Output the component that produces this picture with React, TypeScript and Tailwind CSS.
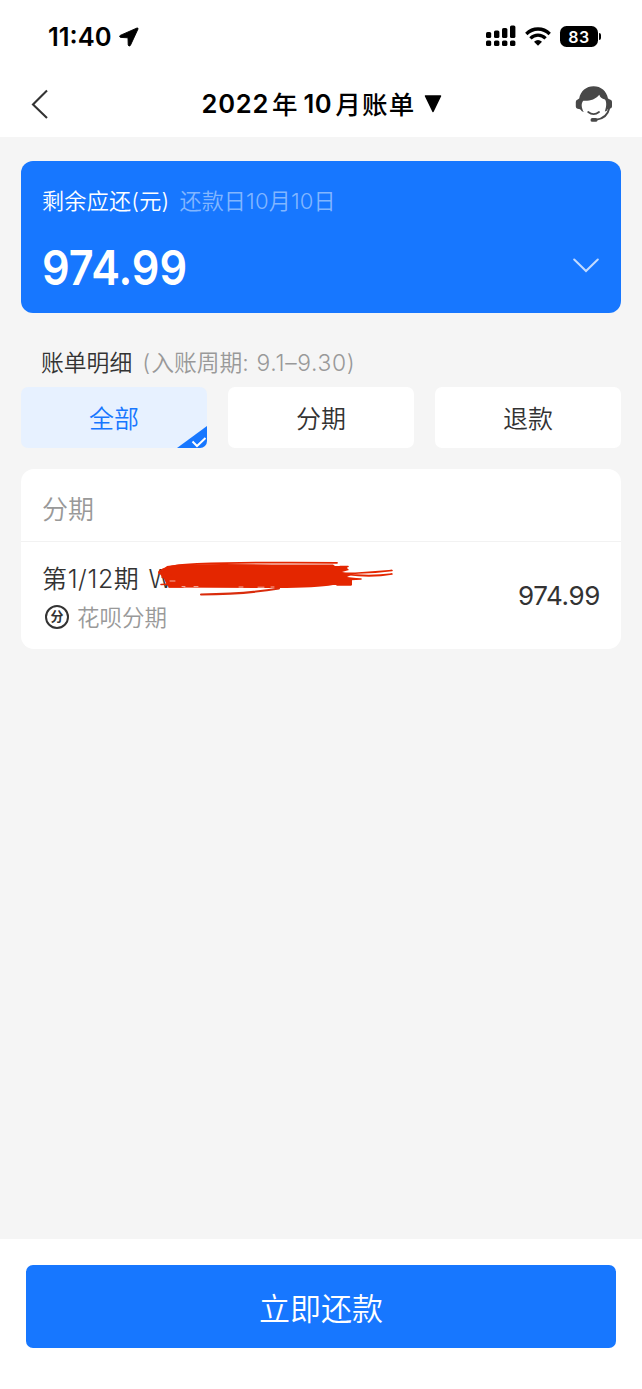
type Tab = {
  key: string;
  label: string;
};

const TABS: Tab[] = [
  { key: "all", label: "全部" },
  { key: "installment", label: "分期" },
  { key: "refund", label: "退款" },
];

const ACTIVE_TAB = "all";

function StatusBar() {
  return (
    <div className="flex h-[72px] items-center justify-between pr-[41px] pl-12">
      <div className="flex items-center gap-[7px] pt-[2px]">
        <span className="text-[25.5px] leading-8 font-semibold">11:40</span>
        <svg className="mt-[-1px] h-[20px] w-[20px]" viewBox="0 0 20 20">
          <path
            d="M18 1 L1.2 8.4 Q-.2 9.8 1.6 10.4 L9 10.8 L9.2 18 Q9.8 20 11.4 18.4 L19 2 Q19.2 .6 18 1 Z"
            fill="#000"
            stroke="#000"
            strokeWidth="0.9"
          />
        </svg>
      </div>
      <div className="flex items-center">
        <svg className="h-[22px] w-[30px]" viewBox="0 0 30 22" fill="#000">
          <rect x="0" y="7" width="5.2" height="6" rx="1.6" />
          <rect x="8" y="5.5" width="5.4" height="7.5" rx="1.6" />
          <rect x="16" y="3" width="5.4" height="10" rx="1.6" />
          <rect x="24" y="0.5" width="5.4" height="12.5" rx="1.6" />
          <rect x="0" y="15.5" width="5.2" height="5.5" rx="1.6" />
          <rect x="8" y="15.5" width="5.4" height="5.5" rx="1.6" />
          <rect x="16" y="15.5" width="5.4" height="5.5" rx="1.6" />
          <rect x="24" y="15.5" width="5.4" height="5.5" rx="1.6" />
        </svg>
        <svg className="ml-[9px] h-[19px] w-[26px]" viewBox="0 0 26 19" fill="none" stroke="#000" strokeWidth="3.3">
          <path d="M1.3 7 Q6.3 2 13 2 T24.7 7" />
          <path d="M5.4 11.4 Q8.8 8.1 13 8.1 T20.6 11.4" />
          <path d="M9 14.8 Q13 11.4 17 14.8 L13 18.8 Z" fill="#000" stroke="none" />
        </svg>
        <div className="ml-[9px] flex h-[21px] w-[38px] items-center justify-center rounded-[6.5px] bg-black pt-px text-[16px] font-semibold tracking-[0.03em] text-white">
          83
        </div>
        <div className="ml-px h-[7px] w-[2px] rounded-r-full bg-black" />
      </div>
    </div>
  );
}

function ServiceIcon() {
  return (
    <svg className="mt-[-2px] h-[38px] w-[38px]" viewBox="0 0 38 38" fill="none">
      <path
        d="M4.2 13.5 C5.5 6 11.3 1.2 18.6 1.2 C26 1.2 31.5 6 33 13.5 L36 15 Q37 15.5 37 17 V21.5 Q37 23.5 34.7 23.8 L32.8 24 Q31.8 26.5 29.8 26.5 C31.5 22 31.8 17 30 14.5 C26.8 14 25 12.2 24.3 9.8 C20.5 14.8 14.8 16 8.3 15.7 C6 18 6.3 22.8 8.8 27 Q6.8 26.7 5.1 24.3 L2.6 23.8 Q.8 23.3 .8 21.5 V17 Q.8 15.2 2.3 14.7 Z"
        fill="#484848"
      />
      <path d="M13.2 27 Q18.6 31.2 24 27" stroke="#484848" strokeWidth="1.8" strokeLinecap="round" />
      <path d="M34.3 23 C33 29.5 28.5 33.8 21 34.8" stroke="#484848" strokeWidth="1.9" />
      <rect x="15.5" y="33" width="7" height="3.8" rx="1.9" fill="#484848" />
    </svg>
  );
}

function NavBar() {
  return (
    <div className="flex h-[65px] items-center justify-between pr-[29px] pl-[31px]">
      <svg className="mt-[-2px] h-[30px] w-[37px]" viewBox="0 0 37 30" fill="none" stroke="#333" strokeWidth="2.1">
        <path d="M16 1.5 L2 15.5 L16 29" />
      </svg>
      <h1 className="mt-[-2px] flex items-center text-[25.5px] leading-8 font-semibold whitespace-nowrap">
        <span className="tracking-[0.03em]">2022</span>
        <span className="mt-[-2px] ml-[3px] font-['Noto_Sans_CJK_SC'] font-medium">年</span>
        <span className="ml-[6px] tracking-[0.02em]">10</span>
        <span className="mt-[-2px] ml-[3px] font-['Noto_Sans_CJK_SC'] font-medium tracking-[0.05em]">月账单</span>
        <svg className="ml-[8px] h-[18px] w-[18px]" viewBox="0 0 18 18">
          <path d="M1.5 1 H16.5 L9 16.5 Z" fill="#000" stroke="#000" strokeWidth="1.5" strokeLinejoin="round" />
        </svg>
      </h1>
      <ServiceIcon />
    </div>
  );
}

function BalanceCard() {
  return (
    <div className="h-[152px] rounded-[12px] bg-[#1777ff] pt-[24px] pr-[22px] pl-[21px] text-white">
      <div className="flex h-[34px] items-center text-[22.1px] whitespace-nowrap">
        <span className="tracking-[0.01em]">剩余应还(元)</span>
        <span className="ml-[10px] tracking-[0.006em] text-[#82b6ff]">还款日10月10日</span>
      </div>
      <div className="mt-[18px] flex h-[62px] items-center justify-between">
        <span className="origin-left scale-x-[0.9] text-[48px] font-semibold">974.99</span>
        <svg className="mt-[-5px] h-[15px] w-[26px]" viewBox="0 0 26 15" fill="none" stroke="#c3dbff" strokeWidth="2">
          <path d="M1.2 1.5 L13 13 L24.8 1.5" strokeLinecap="round" />
        </svg>
      </div>
    </div>
  );
}

function Tabs() {
  return (
    <div className="grid h-[61px] grid-cols-3 gap-[21px] text-[25px]">
      {TABS.map((t) =>
        t.key === ACTIVE_TAB ? (
          <div key={t.key} className="relative flex items-center justify-center overflow-hidden rounded-[7px] bg-[#e7f1ff] pt-[5px] text-[#1777ff]">
            {t.label}
            <svg className="absolute right-0 bottom-0 h-[22px] w-[30px]" viewBox="0 0 30 22">
              <path d="M0 22 L30 0 V22 Z" fill="#1777ff" />
              <path d="M15.5 15.5 L20 20 L28.5 12" fill="none" stroke="#fff" strokeWidth="2" />
            </svg>
          </div>
        ) : (
          <div key={t.key} className="flex items-center justify-center rounded-[7px] bg-white pt-[5px] text-[#333]">
            {t.label}
          </div>
        )
      )}
    </div>
  );
}

function Scribble() {
  return (
    <svg className="absolute top-0 left-[115px] h-[40px] w-[240px]" viewBox="0 0 240 40" fill="none" stroke="#e42600" strokeLinecap="round" strokeLinejoin="round">
      <path
        d="M2 12 L10 5 L22 3.6 Q60 2.5 115 3.5 L176 3.5 L178 5 L191 5 L190 7 L192 9 L185 11 L194 14 L190 16 L204 17.5 L195 19 L195 24 L176 24 Q160 26.8 120 27 L12 26.6 L10 24 L7 18 Z"
        fill="#e42600"
        stroke="none"
      />
      <path d="M2 11 Q8 4 40 2.8 Q100 1 180 1.8" strokeWidth="1.8" />
      <path d="M2 12 L12 10 M5 16 L14 14 M4 23.5 L14 23 M12 26 L26 26 M183 5.5 L191 5.5" strokeWidth="1.6" />
      <path d="M184 12 Q210 13 235 9.5 Q212 11 188 13 Q212 16 235 13 Q215 16.5 190 13.5 M184 19 L204 18 M180 24 L194 24" strokeWidth="1.6" />
      <path d="M44 33.5 Q90 33 122 27.5" strokeWidth="2" stroke="#d92c0c" />
      <path d="M13 20 H18 M25 25.6 H28 M37 25.6 H41 M82 26 H86 M101 26.2 H107 M114 26 H117" stroke="#f9d4cb" strokeWidth="0.8" />
    </svg>
  );
}

function BillItem() {
  return (
    <div className="flex h-[107px] items-center justify-between pr-[21px] pl-[21px]">
      <div className="pt-[5px]">
        <div className="relative flex h-[36px] items-center pt-[3px] text-[25px] whitespace-nowrap text-[#333]">
          <span className="tracking-[0.025em]">第1/12期</span>
          <span className="ml-[9px] font-light">W</span>
          <Scribble />
        </div>
        <div className="mt-[1px] flex h-[38px] items-center">
          <div className="ml-[3px] flex h-[24px] w-[24px] items-center justify-center rounded-full border-2 border-[#333] text-[13px] leading-none font-bold text-[#333]">
            分
          </div>
          <span className="ml-[8px] pt-[2px] text-[22.5px] text-[#999]">花呗分期</span>
        </div>
      </div>
      <span className="text-[26px] font-normal tracking-[-0.015em] text-[#333]">974.99</span>
    </div>
  );
}

export default function App() {
  return (
    <div className="flex h-[1389px] w-[642px] flex-col overflow-hidden bg-white font-['Inter','Noto_Sans_CJK_SC',sans-serif] font-[350] text-black">
      <StatusBar />
      <NavBar />

      <main className="flex-1 bg-[#f5f5f5] px-[21px] pt-[24px]">
        <BalanceCard />

        <div className="mt-[33px] flex h-[34px] items-center pl-[20px] text-[22.8px] whitespace-nowrap">
          <span className="text-[#333]">账单明细</span>
          <span className="ml-[10px] text-[#999]">
            <span className="mr-[1px]">(</span>入账周期<span className="tracking-[0.03em]">: 9.1–9.30)</span>
          </span>
        </div>

        <div className="mt-[7px]">
          <Tabs />
        </div>

        <div className="mt-[21px] h-[180px] rounded-[13px] bg-white">
          <div className="flex h-[73px] items-center border-b border-[#f2f2f2] pt-[9px] pl-[21px] text-[26px] text-[#999]">
            分期
          </div>
          <BillItem />
        </div>
      </main>

      <footer className="h-[150px] px-[26px] pt-[26px]">
        <button className="flex h-[83px] w-full items-center justify-center rounded-[7px] bg-[#1777ff] pt-[5px] text-[31px] text-white">
          立即还款
        </button>
      </footer>
    </div>
  );
}
